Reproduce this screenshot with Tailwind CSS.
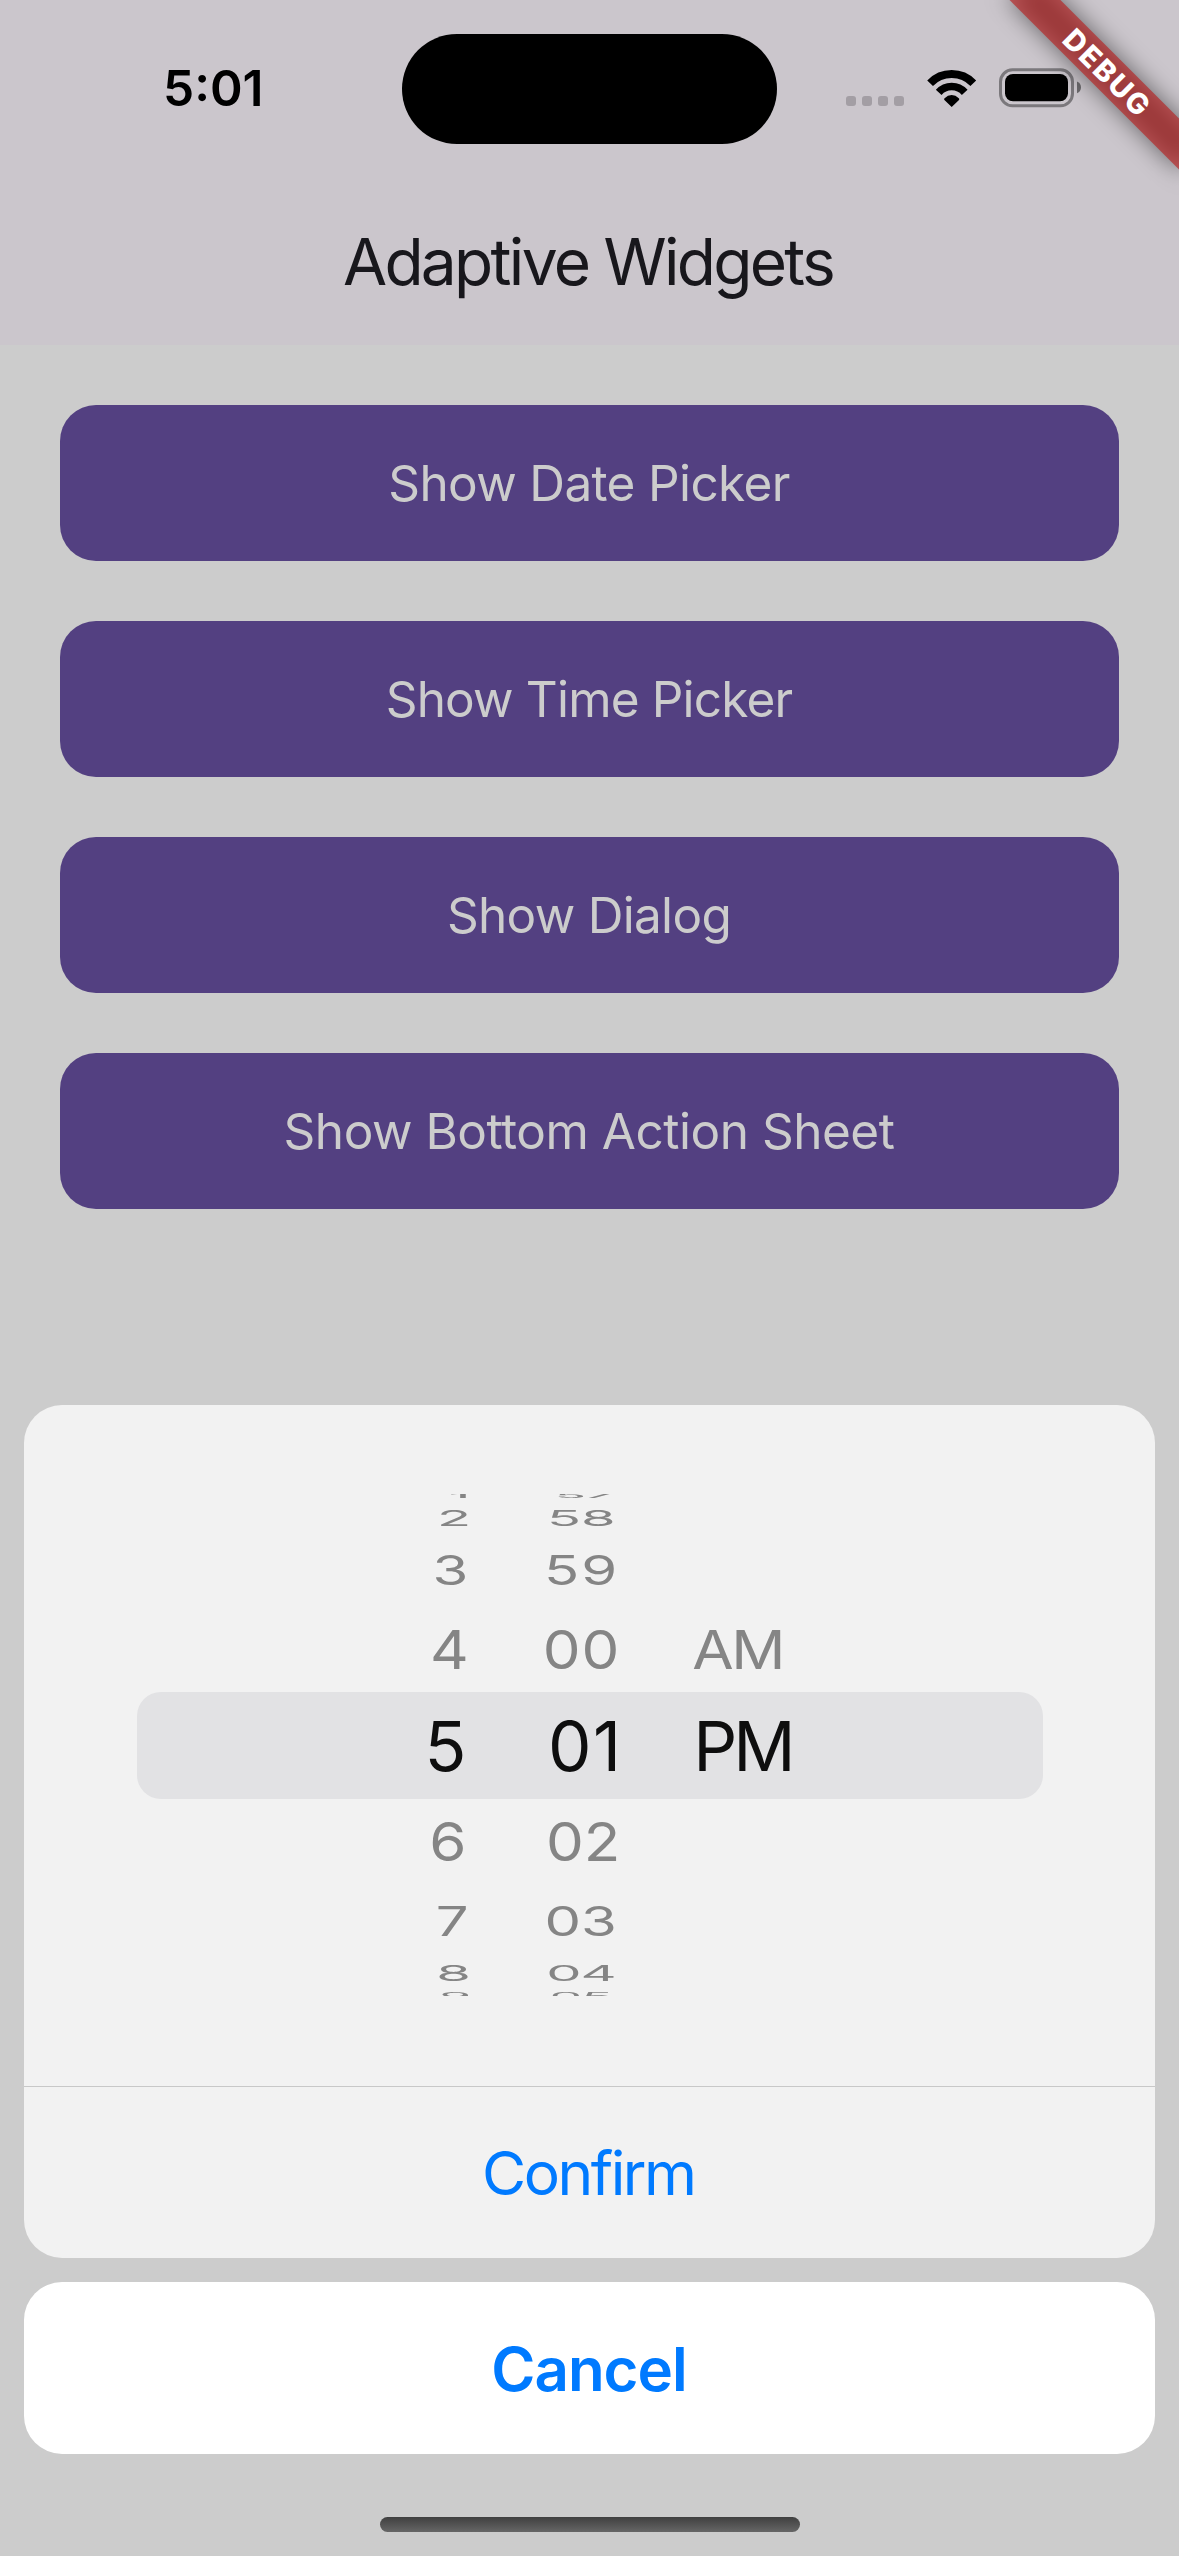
<!DOCTYPE html>
<html lang="en">
<head>
<meta charset="utf-8">
<title>Adaptive Widgets</title>
<script src="https://cdn.jsdelivr.net/npm/@tailwindcss/browser@4"></script>
</head>
<body class="bg-[#cccccc]">
<div class="relative flex h-[2556px] w-[1179px] flex-col overflow-hidden bg-[#cccccc] font-[Inter,sans-serif] whitespace-nowrap">

  <!-- App bar -->
  <header class="h-[345px] shrink-0 bg-[#cbc6cc]">
    <div class="flex h-[176px] items-center text-black">
      <div class="w-[402px] pt-[1px] pl-[163px] text-[49.5px] leading-none font-semibold">5:01</div>
      <div class="mt-[1.5px] h-[110.5px] w-[375px] rounded-full bg-black"></div>
      <div class="mt-[26px] ml-[69px] flex gap-[6px]">
        <i class="size-[10px] rounded-[3px] bg-[#a39ea4]"></i>
        <i class="size-[10px] rounded-[3px] bg-[#a39ea4]"></i>
        <i class="size-[10px] rounded-[3px] bg-[#a39ea4]"></i>
        <i class="size-[10px] rounded-[3px] bg-[#a39ea4]"></i>
      </div>
      <svg class="ml-[23px] h-[37px] w-[50px]" viewBox="0 0 50 37" fill="none">
        <path d="M3.1 13.2A30 30 0 0 1 46.3 13.2" stroke="#000" stroke-width="8"/>
        <path d="M11.7 22.3A17.5 17.5 0 0 1 37.7 22.3" stroke="#000" stroke-width="7.7"/>
        <path d="M24.7 37L17.4 30Q16.6 29 17.6 28.2Q20.8 25 24.7 25Q28.6 25 31.8 28.2Q32.8 29 32 30Z" fill="#000"/>
      </svg>
      <svg class="ml-[22px] h-[40px] w-[83px]" viewBox="0 0 83 40" fill="none">
        <rect x="1.5" y="1.8" width="72" height="36" rx="12" stroke="#7b787c" stroke-width="3"/>
        <rect x="6" y="6" width="63" height="27.3" rx="8" fill="#000"/>
        <path d="M78 13.6C80.6 14.6 82 16.8 82 19.4C82 22 80.6 24.2 78 25.2Z" fill="#6b696c"/>
      </svg>
    </div>
    <h1 class="flex h-[169px] items-center justify-center pt-[2px] pr-[3px] text-[64px] leading-none tracking-[-2.7px] text-[#18171c]">Adaptive Widgets</h1>
  </header>

  <!-- Actions -->
  <main class="flex h-[1060px] shrink-0 flex-col gap-[60px] p-[60px] text-[49.5px] text-[#cccccc]">
    <button class="h-[156px] rounded-[36px] bg-[#534081] pr-[1px] tracking-[-0.65px]">Show Date Picker</button>
    <button class="h-[156px] rounded-[36px] bg-[#534081] pr-[1px] tracking-[-0.83px]">Show Time Picker</button>
    <button class="h-[156px] rounded-[36px] bg-[#534081] pr-[1px] tracking-[-0.7px]">Show Dialog</button>
    <button class="h-[156px] rounded-[36px] bg-[#534081] pr-[1px] tracking-[-0.48px]">Show Bottom Action Sheet</button>
  </main>

  <!-- Time picker sheet -->
  <section class="mx-6 flex h-[853.3px] shrink-0 flex-col overflow-hidden rounded-[38px] bg-[#f2f2f2]">
    <div class="h-[681px] shrink-0 pt-[89px]">
      <div class="h-[502px] overflow-hidden leading-none text-[#858585]">
        <div class="-mt-[5.2px] grid h-[14px] grid-cols-[120px_160px_1fr] content-center pl-[376px] text-[50px] font-medium">
          <div class="scale-y-[0.13] pl-[49px]">1</div>
          <div class="scale-y-[0.13] pl-[35px] tracking-[-2px]">57</div>
        </div>
        <div class="grid h-[30.4px] grid-cols-[120px_160px_1fr] content-center pl-[376px] text-[56px]">
          <div class="scale-y-[0.393] pl-[37px]">2</div>
          <div class="scale-y-[0.393] pl-[27px]">58</div>
        </div>
        <div class="grid h-[74.2px] grid-cols-[120px_160px_1fr] content-center pl-[376px] text-[58px]">
          <div class="scale-y-[0.7] pl-[32.5px]">3</div>
          <div class="scale-y-[0.7] pl-[24px] tracking-[2px]">59</div>
        </div>
        <div class="grid h-[84.6px] grid-cols-[120px_160px_1fr] content-center pb-[2px] pl-[376px] text-[60px]">
          <div class="scale-y-[0.9] pl-[30px]">4</div>
          <div class="scale-y-[0.9] pl-[22.7px] tracking-[1px]">00</div>
          <div class="scale-y-[0.9] pl-[12.2px] tracking-[-2.4px]">AM</div>
        </div>
        <div class="mx-[112.5px] mb-[0.7px] grid h-[107.3px] grid-cols-[120px_160px_1fr] content-center rounded-[24px] bg-[#e2e2e4] pt-[1px] pl-[263.5px] text-[69px] text-[#0e0e0e]">
          <div class="pl-[24.5px]">5</div>
          <div class="pl-[28px] tracking-[1.4px]">01</div>
          <div class="pl-[13.2px] tracking-[-3.9px]">PM</div>
        </div>
        <div class="grid h-[83px] grid-cols-[120px_160px_1fr] content-center pl-[376px] text-[60px]">
          <div class="scale-y-[0.9] pl-[29.3px]">6</div>
          <div class="scale-y-[0.9] pl-[26px]">02</div>
        </div>
        <div class="grid h-[76px] grid-cols-[120px_160px_1fr] content-center pl-[376px] text-[58px]">
          <div class="scale-y-[0.7] pl-[35.7px]">7</div>
          <div class="scale-y-[0.7] pl-[24.4px]">03</div>
        </div>
        <div class="grid h-[27.4px] grid-cols-[120px_160px_1fr] content-center pl-[376px] text-[56px]">
          <div class="scale-y-[0.393] pl-[36.2px]">8</div>
          <div class="scale-y-[0.393] pl-[26.2px] tracking-[-1px]">04</div>
        </div>
        <div class="grid h-[20.6px] grid-cols-[120px_160px_1fr] content-center pl-[376px] text-[51px]">
          <div class="scale-y-[0.19] pl-[39.5px]">9</div>
          <div class="scale-y-[0.19] pl-[29.7px]">05</div>
        </div>
      </div>
    </div>
    <button class="flex-1 border-t border-[#c8c8c8] pt-[2px] pr-[2.4px] text-[60.5px] tracking-[-2.5px] text-[#007aff]">Confirm</button>
  </section>

  <button class="mx-6 mt-[24.2px] h-[171.5px] shrink-0 rounded-[38px] bg-white pt-[1px] pr-[1px] text-[60px] font-semibold tracking-[-1px] text-[#007aff]">Cancel</button>

  <!-- Home indicator -->
  <div class="mx-auto mt-[63px] h-[15px] w-[420px] shrink-0 rounded-full bg-linear-to-b from-[#404040] to-[#666666]"></div>

  <!-- Debug ribbon -->
  <div class="absolute top-0 right-0 size-[300px] overflow-hidden">
    <div class="absolute top-[54px] left-[108px] h-[36px] w-[240px] rotate-45 bg-black/50 blur-[12px]"></div>
    <div class="absolute top-[54px] left-[28px] flex h-[36px] w-[400px] rotate-45 items-center justify-center bg-[#b71c1c]/63 pl-[2px] text-[29px] leading-none font-extrabold tracking-[2px] text-white">DEBUG</div>
  </div>
</div>
</body>
</html>
